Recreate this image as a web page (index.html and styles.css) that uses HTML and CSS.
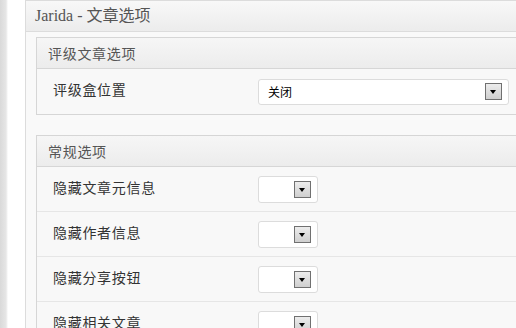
FILE: index.html
```html
<!DOCTYPE html>
<html lang="zh-CN">
<head>
    <meta charset="UTF-8">
    <title>Jarida - 文章选项</title>
    <link rel="stylesheet" href="styles.css">
</head>
<body>
    <div class="postbox">
        <h3 class="postbox-title">Jarida - 文章选项</h3>
        <div class="postbox-inside">

            <!-- Review options -->
            <div class="option-group">
                <div class="group-title">评级文章选项</div>
                <div class="option-row">
                    <label class="option-label">评级盒位置</label>
                    <div class="select wide">
                        <span class="select-value">关闭</span>
                        <span class="select-arrow"></span>
                    </div>
                </div>
            </div>

            <!-- General options -->
            <div class="option-group">
                <div class="group-title">常规选项</div>
                <div class="option-row">
                    <label class="option-label">隐藏文章元信息</label>
                    <div class="select small"><span class="select-value"></span><span class="select-arrow"></span></div>
                </div>
                <div class="option-row">
                    <label class="option-label">隐藏作者信息</label>
                    <div class="select small"><span class="select-value"></span><span class="select-arrow"></span></div>
                </div>
                <div class="option-row">
                    <label class="option-label">隐藏分享按钮</label>
                    <div class="select small"><span class="select-value"></span><span class="select-arrow"></span></div>
                </div>
                <div class="option-row">
                    <label class="option-label">隐藏相关文章</label>
                    <div class="select small"><span class="select-value"></span><span class="select-arrow"></span></div>
                </div>
            </div>
        </div>
    </div>
</body>
</html>
```

FILE: styles.css
```css
/* Global */
body, html {
    margin: 0;
    padding: 0;
    height: 100%;
    overflow: hidden;
}

body {
    font-family: "Liberation Sans", "Noto Sans CJK SC", sans-serif;
    color: #333;
    background: linear-gradient(to right, #d9d9d9 0, #e6e6e6 6px, #f2f2f2 7px, #fff 8px);
}

/* Outer meta box */
.postbox {
    margin-left: 25px;
    width: 560px;
    border: 1px solid #dcdcdc;
    background: #f9f9f9;
}

.postbox-title {
    margin: 0;
    height: 30px;
    line-height: 30px;
    padding-left: 9px;
    font-family: "Liberation Serif", "Noto Sans CJK SC", serif;
    font-size: 16px;
    font-weight: normal;
    color: #555;
    background: linear-gradient(to bottom, #f8f8f8, #ececec);
    border-bottom: 1px solid #dcdcdc;
}

.postbox-inside {
    padding: 5px 0 0 10px;
}

/* Option groups */
.option-group {
    border: 1px solid #d6d6d6;
    background: #f8f8f8;
    margin-bottom: 20px;
}

.group-title {
    height: 30px;
    line-height: 30px;
    padding-left: 11px;
    font-size: 14px;
    letter-spacing: 0.7px;
    color: #555;
    font-family: "Noto Sans CJK SC", sans-serif;
    background: linear-gradient(to bottom, #f6f6f6, #ececec);
    border-bottom: 1px solid #d6d6d6;
}

.option-row {
    display: grid;
    grid-template-columns: 221px 1fr;
    align-items: center;
    height: 44px;
    border-bottom: 1px solid #e6e6e6;
}

.option-group .option-row:last-child {
    height: 45px;
    border-bottom: none;
}

.option-label {
    padding: 0 0 5px 16px;
    font-family: "Noto Sans CJK SC", sans-serif;
    font-size: 14px;
    letter-spacing: 0.7px;
    color: #333;
}

/* Fake select boxes */
.select {
    display: flex;
    align-items: center;
    justify-content: space-between;
    box-sizing: border-box;
    height: 27px;
    padding: 0 6px 0 9px;
    background: #fff;
    border: 1px solid #dcdcdc;
    border-radius: 3px;
}

.select.wide {
    width: 251px;
    height: 26px;
}

.select.small {
    width: 60px;
}

.select-value {
    font-family: "Noto Sans CJK SC", sans-serif;
    font-size: 12px;
    color: #000;
}

.select-arrow {
    position: relative;
    box-sizing: border-box;
    width: 17px;
    height: 17px;
    border: 1px solid #707070;
    background: linear-gradient(to bottom, #ececec, #cfcfcf);
}

.select-arrow::after {
    content: "";
    position: absolute;
    left: 4px;
    top: 6px;
    border-left: 3.5px solid transparent;
    border-right: 3.5px solid transparent;
    border-top: 4px solid #000;
}
```
